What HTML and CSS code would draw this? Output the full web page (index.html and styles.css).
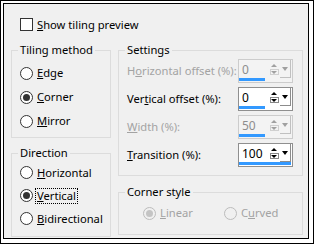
FILE: index.html
```html
<!DOCTYPE html>
<html>
<head>
<meta charset="utf-8">
<link rel="stylesheet" href="styles.css">
</head>
<body>
<div class="frame">
  <div class="dialog">
    <label class="check-row"><span class="checkbox"></span><span class="lbl"><u>S</u>how tiling preview</span></label>
    <div class="cols">
      <div class="col-left">
        <fieldset class="group">
          <legend>Tiling method</legend>
          <div class="body b-tiling">
            <div class="radio-row"><span class="radio"></span><span class="lbl"><u>E</u>dge</span></div>
            <div class="radio-row"><span class="radio checked"></span><span class="lbl"><u>C</u>orner</span></div>
            <div class="radio-row"><span class="radio"></span><span class="lbl"><u>M</u>irror</span></div>
          </div>
        </fieldset>
        <fieldset class="group">
          <legend>Direction</legend>
          <div class="body b-dir">
            <div class="radio-row"><span class="radio"></span><span class="lbl"><u>H</u>orizontal</span></div>
            <div class="radio-row"><span class="radio checked"></span><span class="lbl focus"><u>V</u>ertical</span></div>
            <div class="radio-row"><span class="radio"></span><span class="lbl"><u>B</u>idirectional</span></div>
          </div>
        </fieldset>
      </div>
      <div class="col-right">
        <fieldset class="group">
          <legend>Settings</legend>
          <div class="body b-settings">
            <div class="set-row disabled">
              <span class="set-label">H<u>o</u>rizontal offset (%):</span>
              <div class="spin">
                <div class="spin-top">
                  <span class="spin-num">0</span>
                  <span class="spin-arrows"><span class="tri-up"></span><span class="dn-box"><span class="tri-dn"></span></span></span>
                  <span class="spin-drop"><span class="tri-drop"></span></span>
                </div>
                <span class="bar" style="width:26px"></span>
              </div>
            </div>
            <div class="set-row">
              <span class="set-label">Ver<u>t</u>ical offset (%):</span>
              <div class="spin">
                <div class="spin-top">
                  <span class="spin-num">0</span>
                  <span class="spin-arrows"><span class="tri-up"></span><span class="dn-box"><span class="tri-dn"></span></span></span>
                  <span class="spin-drop"><span class="tri-drop"></span></span>
                </div>
                <span class="bar" style="width:26px"></span>
              </div>
            </div>
            <div class="set-row disabled">
              <span class="set-label"><u>W</u>idth (%):</span>
              <div class="spin">
                <div class="spin-top">
                  <span class="spin-num">50</span>
                  <span class="spin-arrows"><span class="tri-up"></span><span class="dn-box"><span class="tri-dn"></span></span></span>
                  <span class="spin-drop"><span class="tri-drop"></span></span>
                </div>
                <span class="bar" style="width:26px"></span>
              </div>
            </div>
            <div class="set-row">
              <span class="set-label"><u>T</u>ransition (%):</span>
              <div class="spin">
                <div class="spin-top">
                  <span class="spin-num">100</span>
                  <span class="spin-arrows"><span class="tri-up"></span><span class="dn-box"><span class="tri-dn"></span></span></span>
                  <span class="spin-drop"><span class="tri-drop"></span></span>
                </div>
                <span class="bar" style="width:52px"></span>
              </div>
            </div>
          </div>
        </fieldset>
        <fieldset class="group">
          <legend>Corner style</legend>
          <div class="body b-corner">
            <div class="radio-row disabled"><span class="radio checked"></span><span class="lbl"><u>L</u>inear</span></div>
            <div class="radio-row disabled"><span class="radio"></span><span class="lbl">C<u>u</u>rved</span></div>
          </div>
        </fieldset>
      </div>
    </div>
  </div>
</div>
</body>
</html>
```
FILE: styles.css
```css
html, body {
  margin: 0;
  padding: 0;
}
body {
  width: 314px;
  height: 244px;
  font-family: "Noto Sans", "Open Sans", sans-serif;
  font-size: 11.2px;
  color: #000;
  background: #fff;
  overflow: hidden;
}
u {
  text-decoration: underline;
  text-underline-offset: 1px;
}
.frame {
  box-sizing: border-box;
  width: 314px;
  height: 244px;
  border: 1px solid #000;
  padding: 2px 4px 4px 2px;
  background: #fff;
}
.dialog {
  box-sizing: border-box;
  height: 100%;
  border: 1px solid #000;
  background: #f0f0f0;
  padding: 14px 0 0 7px;
}
.check-row {
  display: flex;
  align-items: center;
  gap: 4px;
  margin-left: 9px;
  height: 13px;
}
.checkbox {
  box-sizing: border-box;
  width: 13px;
  height: 13px;
  border: 1px solid #333;
  background: #fff;
  flex: none;
}
.lbl {
  line-height: 16px;
  white-space: nowrap;
}
.cols {
  display: flex;
  gap: 7px;
  margin-top: 11px;
}
.col-left {
  width: 100px;
  display: flex;
  flex-direction: column;
  gap: 7px;
}
.col-right {
  width: 185px;
  display: flex;
  flex-direction: column;
  gap: 8px;
}
.group {
  margin: 0;
  padding: 0;
  min-width: 0;
  border: 1px solid #dcdcdc;
}
.group legend {
  padding: 0 2px;
  margin: 0 0 0 6px;
  line-height: 16px;
  white-space: nowrap;
}
.b-tiling {
  padding: 3px 0 4px 8px;
}
.b-dir {
  padding: 0 0 6px 8px;
}
.b-dir .radio-row {
  height: 23px;
}
.radio-row {
  display: flex;
  align-items: center;
  gap: 4px;
  height: 24px;
}
.radio {
  box-sizing: border-box;
  width: 13px;
  height: 13px;
  border: 1px solid #333;
  border-radius: 50%;
  background: #fff;
  display: flex;
  align-items: center;
  justify-content: center;
  flex: none;
}
.radio.checked::after {
  content: "";
  width: 7px;
  height: 7px;
  border-radius: 50%;
  background: #333;
}
.focus {
  border: 1px dotted #000;
  line-height: 14px;
  padding: 0 1px;
  margin-left: -2px;
}
.b-settings {
  padding: 1px 9px 8px 8px;
  display: flex;
  flex-direction: column;
  gap: 4px;
}
.set-row {
  display: flex;
  align-items: center;
  justify-content: space-between;
  height: 24px;
}
.set-label {
  white-space: nowrap;
  line-height: 16px;
}
.spin {
  box-sizing: border-box;
  width: 55px;
  height: 24px;
  border: 1px solid #8f8f8f;
  background: #fff;
  display: flex;
  flex-direction: column;
  flex: none;
}
.spin-top {
  display: flex;
  height: 18px;
}
.spin-num {
  box-sizing: border-box;
  width: 30px;
  padding: 2px 0 0 3px;
  line-height: 16px;
  font-size: 12px;
}
.spin-arrows {
  width: 10px;
  margin-top: 3px;
  height: 12px;
  display: flex;
  flex-direction: column;
  align-items: center;
  gap: 2px;
}
.tri-up {
  width: 0;
  height: 0;
  border-left: 3px solid transparent;
  border-right: 3px solid transparent;
  border-bottom: 3px solid #000;
  margin-top: 1px;
}
.dn-box {
  box-sizing: border-box;
  width: 9px;
  height: 6px;
  border: 1px solid #888;
  display: flex;
  align-items: center;
  justify-content: center;
}
.tri-dn {
  width: 0;
  height: 0;
  border-left: 3px solid transparent;
  border-right: 3px solid transparent;
  border-top: 3px solid #000;
}
.spin-drop {
  box-sizing: border-box;
  width: 11px;
  height: 18px;
  margin-left: 1px;
  border-right: 1px solid #8c8c8c;
  border-bottom: 1px solid #8c8c8c;
  display: flex;
  align-items: center;
  justify-content: center;
}
.tri-drop {
  width: 0;
  height: 0;
  border-left: 3px solid transparent;
  border-right: 3px solid transparent;
  border-top: 4px solid #000;
}
.bar {
  display: block;
  height: 3px;
  background: #3399ff;
}
.set-row.disabled .set-label {
  color: #a3a3a3;
}
.set-row.disabled .spin {
  background: #f3f3f3;
  border-color: #cccccc;
}
.set-row.disabled .spin-num {
  color: #8d8d8d;
}
.set-row.disabled .tri-up {
  border-bottom-color: #a0a0a0;
}
.set-row.disabled .tri-dn {
  border-top-color: #a0a0a0;
}
.set-row.disabled .dn-box {
  border-color: #d0d0d0;
}
.set-row.disabled .tri-drop {
  border-top-color: #a0a0a0;
}
.set-row.disabled .spin-drop {
  border-color: #c0c0c0;
}
.b-corner {
  padding: 0 0 8px 24px;
  display: grid;
  grid-template-columns: 81px 1fr;
}
.b-corner .radio-row {
  height: 26px;
}
.radio-row.disabled .lbl {
  color: #a3a3a3;
}
.radio-row.disabled .radio {
  border-color: #bcbcbc;
  background: #f0f0f0;
}
.radio-row.disabled .radio.checked::after {
  background: #c4c4c4;
}
```
